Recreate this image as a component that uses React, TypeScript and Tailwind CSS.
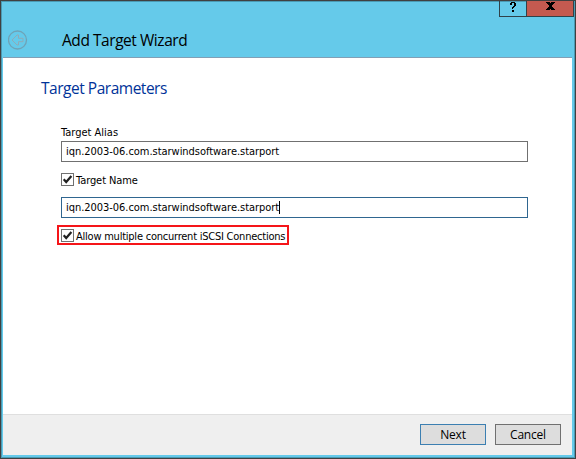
import type { ReactNode } from "react";

const small = "font-['DejaVu_Sans_Condensed','DejaVu_Sans',sans-serif] text-[11px] leading-[14px] whitespace-nowrap";
const segoe = "font-['Open_Sans','Noto_Sans',sans-serif] whitespace-nowrap";

function Checkbox({ children }: { children: ReactNode }) {
  return (
    <label className="flex h-[14px] items-start gap-[2px]">
      <svg width="13" height="13" viewBox="0 0 13 13" className="shrink-0">
        <rect x="0.5" y="0.5" width="12" height="12" fill="#fff" stroke="#707070" />
        <path d="M2.7 6.2 L5.2 9 L10.4 3" fill="none" stroke="#212121" strokeWidth="2.2" />
      </svg>
      <span className="pt-px">{children}</span>
    </label>
  );
}

function Field({ focused }: { focused?: boolean }) {
  return (
    <div className={`flex h-[21px] w-[467px] items-center border bg-white pl-[4px] ${focused ? "border-[#2f6690]" : "border-[#707070]"}`}>
      <span className={`${small} tracking-[-0.04px]`}>iqn.2003-06.com.starwindsoftware.starport</span>
      {focused && <span className="h-[13px] w-px bg-black" />}
    </div>
  );
}

export default function App() {
  return (
    <div className="h-[459px] w-[576px] overflow-hidden border border-[#404040] bg-[#65caea] text-black">
      <div className="flex h-full flex-col border border-[#4a9ab4] px-px pb-[2px]">
        <header className="flex h-[55px] shrink-0 items-start">
          <svg width="20" height="20" viewBox="0 0 20 20" className="mt-[28px] ml-[5px] shrink-0" fill="none" stroke="#6fa3b7">
            <circle cx="9.5" cy="10" r="9" strokeWidth="1.3" />
            <path d="M4 10 L9 5 H10.5 V8.3 H15 V11.7 H10.5 V15 H9 Z" strokeWidth="1" stroke="#8fabb7" />
          </svg>
          <h1 className={`${segoe} mt-[26px] ml-[34px] text-[15.5px] leading-[24px] tracking-[-0.45px]`}>Add Target Wizard</h1>
          <div className="-mt-[2px] -mr-px ml-auto flex h-[17px] border border-t-0 border-[#30424a]">
            <button className="flex w-[27px] items-center justify-center border-r border-[#30424a] pb-[3px]">
              <svg width="6" height="10" viewBox="0 0 6 10" shapeRendering="crispEdges">
                <path d="M1 0h4v1h1v3h-1v1h-1v1h-1v1h-1v-2h1v-1h1v-3h-2v2h-2v-2h1zM2 8h2v2h-2z" />
              </svg>
            </button>
            <button className="flex w-[46px] items-center justify-center bg-[#c45a50] pb-[5px]">
              <svg width="9" height="8" viewBox="0 0 9 8" shapeRendering="crispEdges">
                <path d="M0 0h4v1h1v-1h4v1h-1v1h-1v1h-1v2h1v1h1v1h1v1h-4v-1h-1v1h-4v-1h1v-1h1v-1h1v-2h-1v-1h-1v-1h-1z" />
              </svg>
            </button>
          </div>
        </header>
        <main className="mr-px flex flex-1 flex-col items-start border-t border-[#829fb5] bg-white pt-[18px] pl-[38px]">
          <h2 className={`${segoe} text-[15.5px] leading-[24px] tracking-[-0.48px] text-[#003399]`}>Target Parameters</h2>
          <div className="mt-[26px] flex flex-col items-start pl-[20px]">
            <span className={small}>Target Alias</span>
            <div className="mt-px"><Field /></div>
            <div className="mt-[11px]">
              <Checkbox><span className={`${small} block tracking-[-0.08px]`}>Target Name</span></Checkbox>
            </div>
            <div className="mt-[10px]"><Field focused /></div>
            <div className="mt-[7px] -ml-[4px] flex h-[20px] w-[232px] items-start border-2 border-[#f51519] pt-[2px] pl-[2px]">
              <Checkbox><span className={`${small} block tracking-[-0.23px]`}>Allow multiple concurrent iSCSI Connections</span></Checkbox>
            </div>
          </div>
        </main>
        <footer className="mr-px flex h-[41px] shrink-0 items-start justify-end gap-[9px] border-t border-[#dfdfdf] bg-[#efefef] pt-[9px] pr-[11px]">
          <button className={`${segoe} h-[21px] w-[66px] border border-[#3c7fb1] bg-[#dddddd] text-[12px] leading-[19px] tracking-[-0.2px]`}>Next</button>
          <button className={`${segoe} h-[21px] w-[66px] border border-[#707070] bg-[#dddddd] text-[12px] leading-[19px] tracking-[-0.2px]`}>Cancel</button>
        </footer>
      </div>
    </div>
  );
}
